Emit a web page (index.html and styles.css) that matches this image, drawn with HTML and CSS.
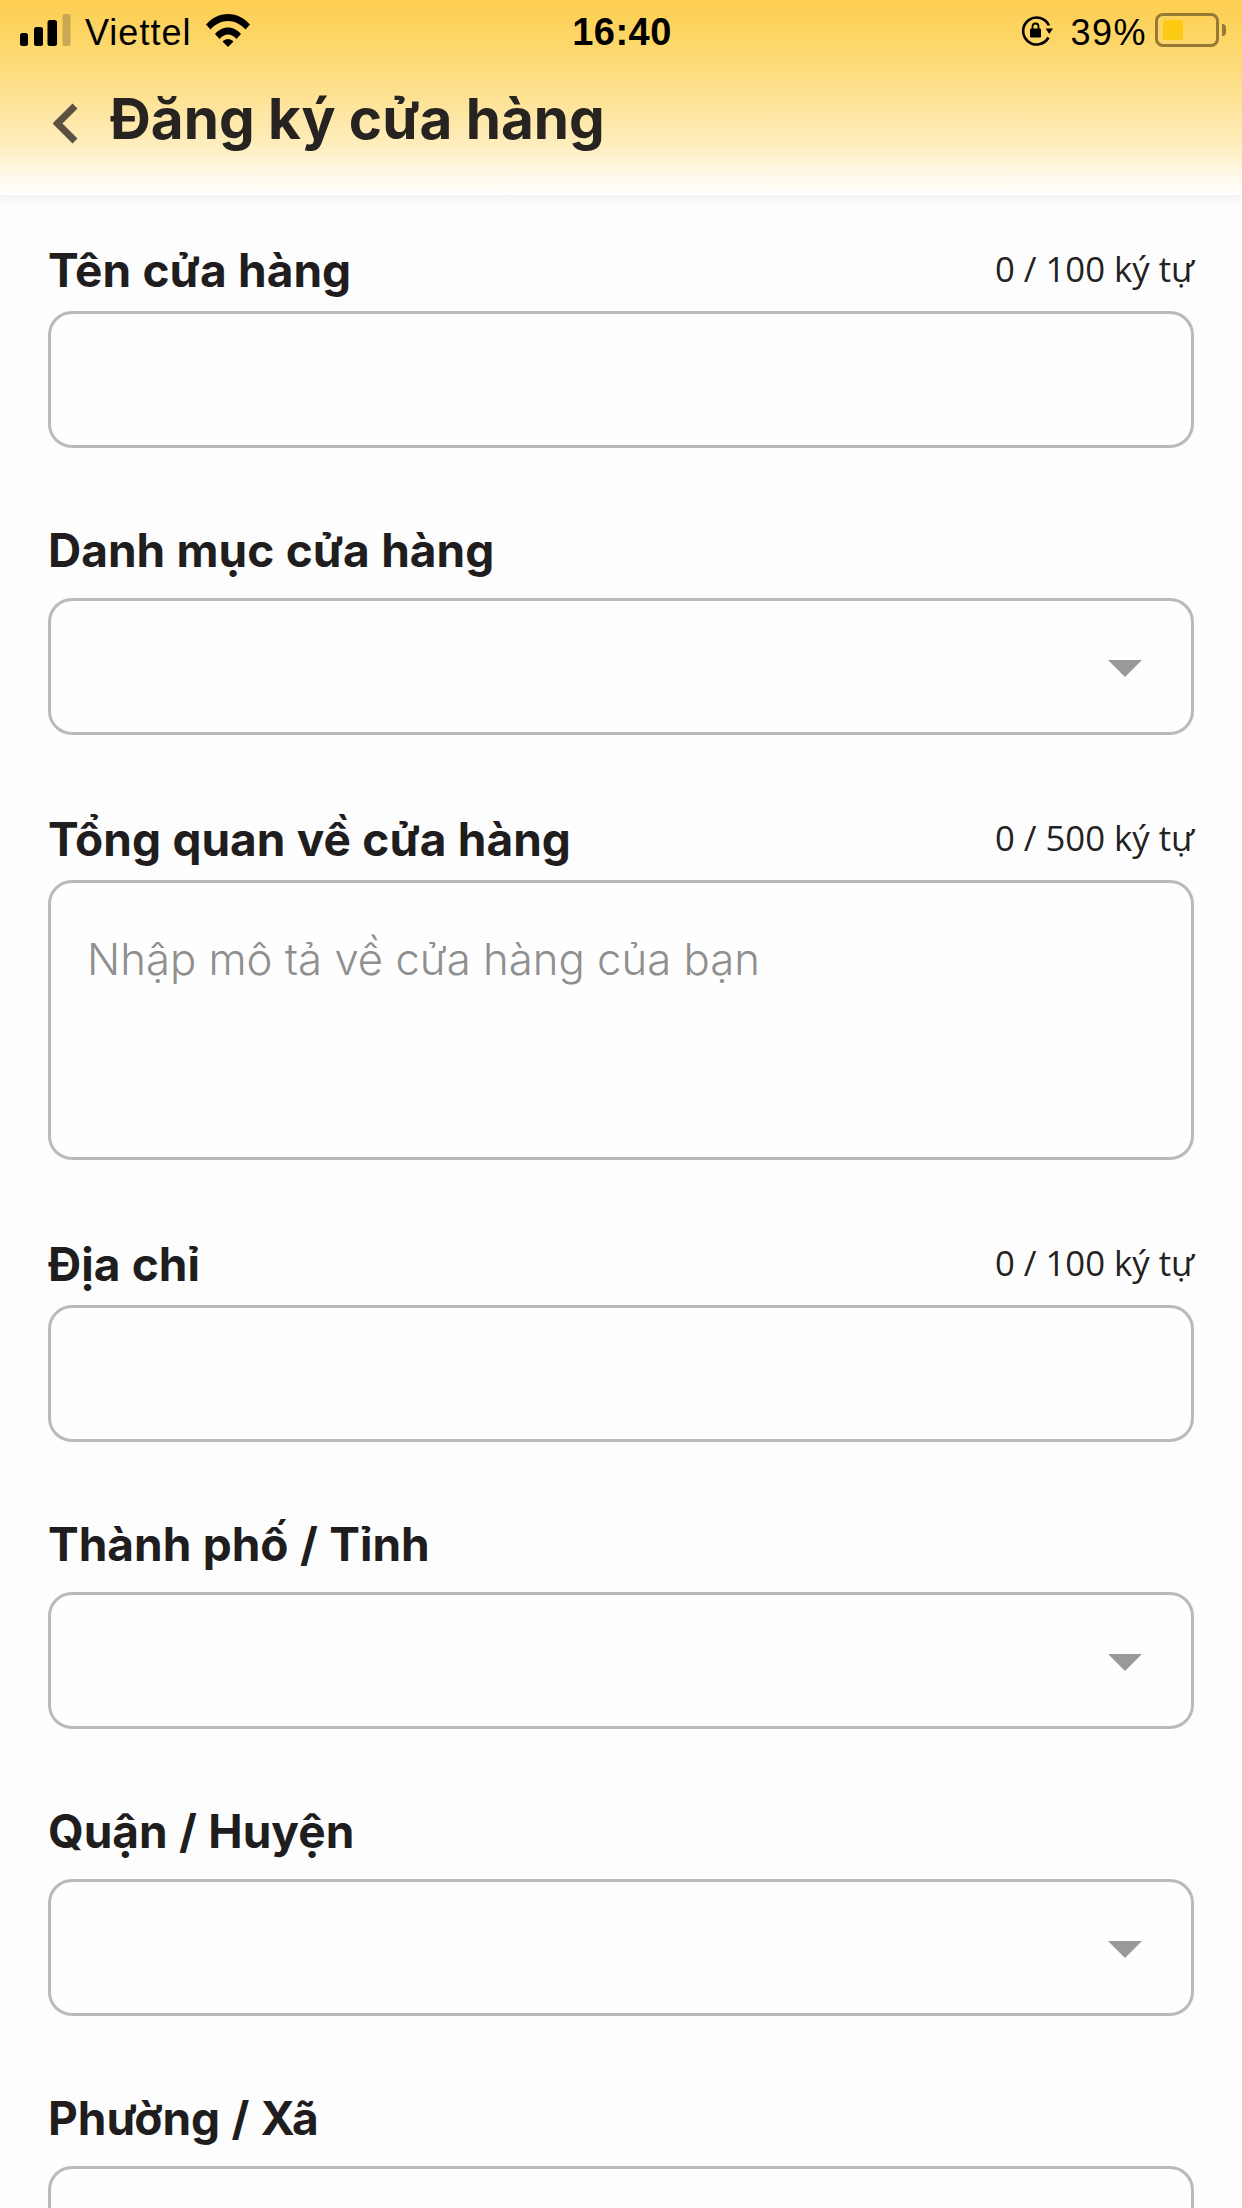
FILE: index.html
```html
<!DOCTYPE html>
<html lang="vi">
<head>
<meta charset="utf-8">
<title>Đăng ký cửa hàng</title>
<link rel="stylesheet" href="styles.css">
</head>
<body>
<header class="appbar">
  <div class="status">
    <div class="status-left">
      <svg class="signal" viewBox="0 0 51 32" aria-hidden="true">
        <rect x="0" y="19" width="8" height="13" rx="2.5" fill="#000"/>
        <rect x="14" y="13" width="9" height="19" rx="2.5" fill="#000"/>
        <rect x="27.5" y="6" width="9.5" height="26" rx="2.5" fill="#000"/>
        <rect x="42.5" y="0" width="8" height="32" rx="2" fill="#c9a855"/>
      </svg>
      <span class="carrier">Viettel</span>
      <svg class="wifi" viewBox="0 0 44 33" aria-hidden="true">
        <path d="M0 10.5C6 4 13.5 0 22 0S38 4 44 10.5L39.5 15.500C34.500 10 28.500 7 22 7S9.500 10 4.500 15.500z" fill="#000"/>
        <path d="M9 20C12.500 16 17 13.500 22 13.500S31.500 16 35 20L30.500 25C28 22 25 20.500 22 20.500S16 22 13.500 25z" fill="#000"/>
        <path d="M16.500 27.500C18 26 20 25 22 25S26 26 27.500 27.500L22 33z" fill="#000"/>
      </svg>
    </div>
    <span class="clock">16:40</span>
    <div class="status-right">
      <svg class="lock" viewBox="0 0 32 30" aria-hidden="true">
        <path d="M28 9.500A13.500 13.500 0 1 0 27.500 21.500" fill="none" stroke="#000" stroke-width="2.600"/>
        <path d="M24.500 12.500h7.500l-3.700 5.500z" fill="#000"/>
        <rect x="9" y="12.500" width="11" height="9" rx="1.300" fill="#000"/>
        <path d="M11.500 13v-2.500a3 3 0 0 1 6 0V13" fill="none" stroke="#000" stroke-width="1.800"/>
      </svg>
      <span class="percent">39%</span>
      <div class="battery">
        <div class="battery-shell"><div class="battery-level"></div></div>
        <div class="battery-cap"></div>
      </div>
    </div>
  </div>
  <div class="navrow">
    <svg class="back" viewBox="0 0 25 41" aria-hidden="true">
      <path d="M22 3 4.500 20.500 22 38" fill="none" stroke="#5b5142" stroke-width="7"/>
    </svg>
    <h1 class="title">Đăng ký cửa hàng</h1>
  </div>
</header>

<main class="form">
  <section class="field field--first">
    <div class="field-head"><span class="label">Tên cửa hàng</span><span class="count">0 / 100 ký tự</span></div>
    <div class="box"></div>
  </section>
  <section class="field field--plain">
    <div class="field-head"><span class="label">Danh mục cửa hàng</span></div>
    <div class="box box--select"><span class="caret"></span></div>
  </section>
  <section class="field">
    <div class="field-head"><span class="label">Tổng quan về cửa hàng</span><span class="count">0 / 500 ký tự</span></div>
    <div class="box box--area"><span class="placeholder">Nhập mô tả về cửa hàng của bạn</span></div>
  </section>
  <section class="field">
    <div class="field-head"><span class="label">Địa chỉ</span><span class="count">0 / 100 ký tự</span></div>
    <div class="box"></div>
  </section>
  <section class="field field--plain">
    <div class="field-head"><span class="label">Thành phố / Tỉnh</span></div>
    <div class="box box--select"><span class="caret"></span></div>
  </section>
  <section class="field field--plain">
    <div class="field-head"><span class="label">Quận / Huyện</span></div>
    <div class="box box--select"><span class="caret"></span></div>
  </section>
  <section class="field field--plain">
    <div class="field-head"><span class="label">Phường / Xã</span></div>
    <div class="box box--select"><span class="caret"></span></div>
  </section>
</main>
</body>
</html>
```

FILE: styles.css
```css
* { box-sizing: border-box; }

html, body { margin: 0; padding: 0; }

body {
  width: 1242px;
  height: 2208px;
  overflow: hidden;
  background: #fdfdfd;
  color: #1f1d1d;
  font-family: Inter, "Liberation Sans", sans-serif;
}

.appbar {
  height: 195px;
  background: linear-gradient(180deg, #fcce50 0%, #fdd86d 25%, #fee294 50%, #feeebf 75%, #fff9e8 90%, #ffffff 100%);
  box-shadow: 0 4px 8px rgba(0, 0, 0, 0.05);
}

.status {
  display: grid;
  grid-template-columns: 1fr auto 1fr;
  align-items: center;
  height: 60px;
  padding: 0 16px 0 20px;
  color: #000;
  font-family: "Liberation Sans", Arial, sans-serif;
  font-size: 36px;
}

.status-left, .status-right { display: flex; align-items: center; }
.status-right { justify-content: flex-end; }

.signal { width: 51px; height: 32px; }
.carrier { margin-left: 14px; margin-top: 5px; letter-spacing: 1px; }
.wifi { width: 44px; height: 33px; margin-left: 15px; }
.clock { margin-top: 5px; margin-right: 2px; font-weight: 700; font-size: 38px; letter-spacing: 0.5px; }
.lock { width: 32px; height: 30px; margin-top: 2px; }
.percent { margin-left: 17px; margin-top: 5px; letter-spacing: 1.5px; }

.battery { display: flex; align-items: center; margin-left: 8px; }
.battery-shell {
  width: 64px;
  height: 34px;
  padding: 4px 5px;
  border: 3px solid #947a35;
  border-radius: 8px;
}
.battery-level {
  width: 20px;
  height: 100%;
  background: #fdca14;
  border-radius: 2px;
}
.battery-cap {
  width: 4px;
  height: 12px;
  margin-left: 3px;
  background: #947a35;
  border-radius: 0 4px 4px 0;
}

.navrow { display: flex; align-items: center; height: 118px; padding-left: 53px; }
.back { width: 25px; height: 41px; margin-top: 8px; }
.title { margin: 0 0 0 32px; font-size: 56.6px; font-weight: 700; line-height: 1; color: #262321; }

.form { padding: 0 48px; }

.field { margin-top: 73px; }
.field--first { margin-top: 44px; }
.field--plain { margin-top: 74px; }

.field-head {
  display: flex;
  justify-content: space-between;
  align-items: center;
  height: 72px;
  padding-bottom: 10px;
}
.field--plain .field-head { height: 76px; padding-bottom: 20px; }

.label { font-size: 46px; font-weight: 700; word-spacing: 0.5px; color: #1f1d1d; }
.count { padding-bottom: 4px; font-family: "Open Sans", sans-serif; font-size: 34.7px; font-weight: 500; color: #222; }

.box {
  position: relative;
  height: 137px;
  background: #fefefe;
  border: 3px solid #bababa;
  border-radius: 24px;
}
.box--area { height: 280px; padding: 50px 36px; }

.caret {
  position: absolute;
  right: 49px;
  top: 59px;
  width: 0;
  height: 0;
  border-left: 17px solid transparent;
  border-right: 17px solid transparent;
  border-top: 17px solid #999;
}

.placeholder { font-size: 43.7px; font-weight: 300; color: #8f8f8f; }
```
